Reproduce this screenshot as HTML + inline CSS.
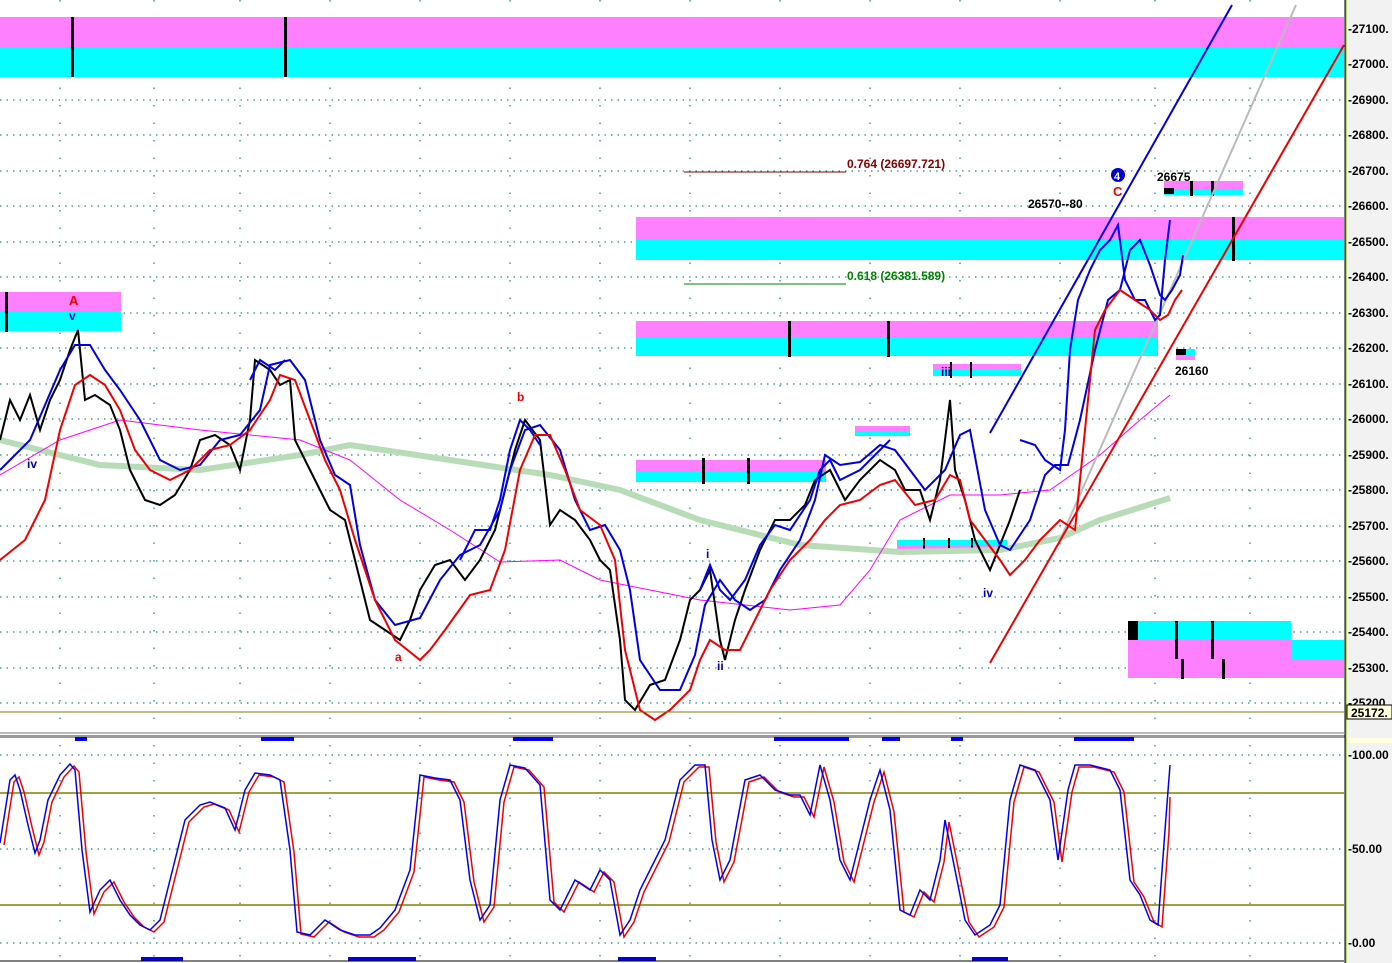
<!DOCTYPE html>
<html><head><meta charset="utf-8"><style>
html,body{margin:0;padding:0;background:#fff;}
svg{display:block;font-family:"Liberation Sans",sans-serif;}
</style></head><body>
<svg width="1392" height="963" viewBox="0 0 1392 963" xmlns="http://www.w3.org/2000/svg">
<rect width="1392" height="963" fill="#fff"/>
<g stroke="#2a8a8a" stroke-width="1.3" stroke-dasharray="1.5 5">
<line x1="0" y1="100" x2="1344" y2="100"/><line x1="0" y1="135" x2="1344" y2="135"/>
<line x1="0" y1="171" x2="1344" y2="171"/><line x1="0" y1="206" x2="1344" y2="206"/>
<line x1="0" y1="242" x2="1344" y2="242"/><line x1="0" y1="277" x2="1344" y2="277"/>
<line x1="0" y1="313" x2="1344" y2="313"/><line x1="0" y1="348" x2="1344" y2="348"/>
<line x1="0" y1="384" x2="1344" y2="384"/><line x1="0" y1="419" x2="1344" y2="419"/>
<line x1="0" y1="455" x2="1344" y2="455"/><line x1="0" y1="490" x2="1344" y2="490"/>
<line x1="0" y1="526" x2="1344" y2="526"/><line x1="0" y1="561" x2="1344" y2="561"/>
<line x1="0" y1="597" x2="1344" y2="597"/><line x1="0" y1="632" x2="1344" y2="632"/>
<line x1="0" y1="668" x2="1344" y2="668"/><line x1="0" y1="703" x2="1344" y2="703"/>
<line x1="0" y1="755" x2="1344" y2="755"/><line x1="0" y1="849" x2="1344" y2="849"/><line x1="0" y1="943" x2="1344" y2="943"/>
</g>
<g stroke="#2a8a8a" stroke-width="1.3" stroke-dasharray="1.5 16">
<line x1="60" y1="0" x2="60" y2="735"/><line x1="154" y1="0" x2="154" y2="735"/><line x1="240" y1="0" x2="240" y2="735"/>
<line x1="330" y1="0" x2="330" y2="735"/><line x1="420" y1="0" x2="420" y2="735"/><line x1="510" y1="0" x2="510" y2="735"/>
<line x1="600" y1="0" x2="600" y2="735"/><line x1="690" y1="0" x2="690" y2="735"/><line x1="780" y1="0" x2="780" y2="735"/>
<line x1="870" y1="0" x2="870" y2="735"/><line x1="960" y1="0" x2="960" y2="735"/><line x1="1060" y1="0" x2="1060" y2="735"/><line x1="1155" y1="0" x2="1155" y2="735"/><line x1="1250" y1="0" x2="1250" y2="735"/>
<line x1="60" y1="745" x2="60" y2="963"/><line x1="154" y1="745" x2="154" y2="963"/><line x1="240" y1="745" x2="240" y2="963"/>
<line x1="330" y1="745" x2="330" y2="963"/><line x1="420" y1="745" x2="420" y2="963"/><line x1="510" y1="745" x2="510" y2="963"/>
<line x1="600" y1="745" x2="600" y2="963"/><line x1="690" y1="745" x2="690" y2="963"/><line x1="780" y1="745" x2="780" y2="963"/>
<line x1="870" y1="745" x2="870" y2="963"/><line x1="960" y1="745" x2="960" y2="963"/><line x1="1060" y1="745" x2="1060" y2="963"/><line x1="1155" y1="745" x2="1155" y2="963"/><line x1="1250" y1="745" x2="1250" y2="963"/>
</g>
<rect x="0" y="17" width="1344" height="30" fill="#ff80ff"/><rect x="0" y="47" width="1344" height="30" fill="#00ffff"/>
<rect x="71" y="17" width="3" height="60" fill="#000"/><rect x="284" y="17" width="3" height="60" fill="#000"/>
<rect x="0" y="292" width="121" height="19" fill="#ff80ff"/><rect x="0" y="311" width="121" height="20" fill="#00ffff"/>
<rect x="5" y="292" width="3" height="40" fill="#000"/>
<rect x="636" y="217" width="708" height="22" fill="#ff80ff"/><rect x="636" y="239" width="708" height="21" fill="#00ffff"/>
<rect x="636" y="321" width="522" height="17" fill="#ff80ff"/><rect x="636" y="338" width="522" height="18" fill="#00ffff"/>
<rect x="788" y="321" width="3" height="36" fill="#000"/><rect x="887" y="321" width="3" height="36" fill="#000"/>
<rect x="636" y="460" width="190" height="11" fill="#ff80ff"/><rect x="636" y="471" width="190" height="11" fill="#00ffff"/>
<rect x="702" y="458" width="3" height="26" fill="#000"/><rect x="747" y="458" width="3" height="26" fill="#000"/>
<rect x="855" y="426" width="55" height="5" fill="#ff80ff"/><rect x="855" y="431" width="55" height="5" fill="#00ffff"/>
<rect x="933" y="364" width="88" height="6" fill="#ff80ff"/><rect x="933" y="370" width="88" height="6" fill="#00ffff"/>
<rect x="950" y="362" width="2" height="16" fill="#000"/><rect x="970" y="362" width="2" height="16" fill="#000"/>
<rect x="897" y="540" width="110" height="9" fill="#00ffff"/><rect x="897" y="545" width="110" height="5" fill="#ff80ff"/>
<rect x="923" y="538" width="2" height="14" fill="#000"/><rect x="948" y="538" width="2" height="14" fill="#000"/><rect x="971" y="538" width="2" height="14" fill="#000"/>
<rect x="1164" y="181" width="79" height="8" fill="#ff80ff"/><rect x="1164" y="189" width="79" height="6" fill="#00ffff"/>
<rect x="1164" y="188" width="10" height="6" fill="#000"/><rect x="1190" y="181" width="3" height="15" fill="#000"/><rect x="1211" y="181" width="3" height="15" fill="#000"/>
<rect x="1232" y="217" width="3" height="44" fill="#000"/>
<rect x="1176" y="349" width="19" height="6" fill="#00ffff"/><rect x="1176" y="355" width="19" height="5" fill="#ff80ff"/><rect x="1176" y="349" width="10" height="6" fill="#000"/>
<rect x="1128" y="621" width="163" height="19" fill="#00ffff"/><rect x="1128" y="640" width="163" height="19" fill="#ff80ff"/>
<rect x="1291" y="640" width="53" height="19" fill="#00ffff"/><rect x="1128" y="659" width="216" height="19" fill="#ff80ff"/>
<rect x="1128" y="621" width="10" height="19" fill="#000"/>
<rect x="1175" y="621" width="3" height="38" fill="#000"/><rect x="1211" y="621" width="3" height="38" fill="#000"/>
<rect x="1181" y="659" width="3" height="20" fill="#000"/><rect x="1222" y="659" width="3" height="20" fill="#000"/>
<line x1="684" y1="172" x2="846" y2="172" stroke="#800000" stroke-width="1"/>
<line x1="684" y1="284" x2="846" y2="284" stroke="#008000" stroke-width="1"/>
<text x="847" y="168" font-size="12" font-weight="bold" fill="#800000">0.764 (26697.721)</text>
<text x="847" y="280" font-size="12" font-weight="bold" fill="#008000">0.618 (26381.589)</text>
<polyline fill="none" stroke="#b8dcb8" stroke-width="6" points="0,440 100,465 200,470 300,455 350,445 450,460 550,475 620,490 700,520 800,545 900,552 1000,550 1060,538 1100,520 1170,498"/>
<polyline fill="none" stroke="#ff00ff" stroke-width="1" points="0,475 60,440 120,420 200,430 300,440 350,460 400,500 450,530 500,562 560,560 600,580 650,590 700,600 790,610 840,605 870,570 900,520 950,495 1000,495 1050,490 1100,455 1140,420 1170,395"/>
<line x1="990" y1="433" x2="1232" y2="5" stroke="#0000dd" stroke-width="2"/>
<line x1="1060" y1="540" x2="1296" y2="5" stroke="#bbbbbb" stroke-width="2"/>
<line x1="990" y1="663" x2="1344" y2="45" stroke="#ee0000" stroke-width="2"/>
<polyline fill="none" stroke="#000" stroke-width="2" points="0,440 10,400 20,420 30,395 40,430 50,400 60,380 70,350 78,330 85,400 95,395 110,405 120,430 130,470 145,500 160,505 175,495 190,470 200,440 215,435 230,445 240,470 250,420 255,360 270,370 280,385 290,380 295,440 310,470 330,510 345,520 355,560 370,620 385,630 400,640 410,620 420,590 435,565 450,560 465,580 480,560 495,530 505,490 515,450 525,420 540,440 550,525 560,510 575,520 590,540 600,560 610,570 620,640 625,700 635,710 650,685 665,680 680,640 690,600 700,590 710,570 720,640 725,660 735,620 745,590 760,550 775,520 790,520 805,505 815,480 830,470 845,500 860,480 880,460 895,470 905,490 920,490 930,520 940,480 950,400 955,470 965,500 975,540 990,570 1000,545 1010,520 1020,490"/>
<g fill="none" stroke="#0000ee" stroke-width="2">
<polyline points="250,380 260,360 275,370 285,360"/>
<polyline points="460,560 475,530 490,530 500,500 510,450 520,420 530,430 540,445"/>
<polyline points="700,590 710,565 720,590 730,600 745,580 760,545 775,525 790,530 810,500 820,470 830,460 840,480 860,470 880,450 890,440"/>
<polyline points="1020,440 1035,445 1045,460 1060,470 1065,430 1070,350 1078,300 1090,270 1100,250 1110,240 1118,225 1125,280 1135,300 1145,300 1155,320 1160,315 1165,260 1170,220"/>
</g>
<polyline fill="none" stroke="#0000dd" stroke-width="2" points="0,470 30,440 60,370 75,345 90,345 105,370 120,390 140,420 160,460 180,470 200,465 220,440 240,435 260,410 270,365 290,360 305,380 320,440 335,475 350,485 360,545 375,600 395,625 420,618 440,580 460,555 480,545 500,510 510,470 525,430 540,425 560,450 575,500 590,530 605,525 620,550 630,590 640,660 660,690 680,690 695,655 705,605 720,580 735,600 750,610 765,600 780,570 800,540 815,500 825,455 840,465 860,462 880,445 895,450 910,470 925,490 945,470 960,435 970,430 985,510 1000,545 1010,550 1030,520 1045,475 1055,465 1068,465 1080,420 1095,350 1108,300 1120,290 1130,250 1140,240 1150,265 1160,295 1165,300 1172,290 1180,275 1183,255"/>
<polyline fill="none" stroke="#ee0000" stroke-width="2" points="0,560 25,540 45,500 60,430 75,385 90,375 105,385 120,410 135,450 150,470 170,480 190,470 210,450 230,445 250,430 270,400 280,375 295,380 310,420 325,460 340,490 355,540 375,600 395,640 420,660 430,650 445,630 470,595 490,590 505,550 520,470 535,435 550,435 565,470 580,510 600,525 615,560 625,650 640,710 655,720 670,710 690,690 700,660 710,640 725,650 740,650 755,620 770,590 790,560 810,540 825,520 840,505 860,500 880,485 895,480 915,505 935,500 950,475 960,480 970,520 985,540 1000,560 1010,575 1025,560 1040,540 1060,520 1075,530 1085,430 1095,330 1105,310 1120,290 1135,300 1150,310 1160,320 1168,315 1175,300 1182,290"/>
<g font-weight="bold" font-size="13">
<text x="69" y="305" fill="#ee0000">A</text><text x="69" y="320" fill="#0000dd" font-size="12">v</text>
<text x="27" y="468" fill="#0000aa" font-size="12">iv</text>
<text x="517" y="401" fill="#ee0000" font-size="12">b</text>
<text x="395" y="661" fill="#ee0000" font-size="12">a</text>
<text x="706" y="558" fill="#0000dd" font-size="12">i</text>
<text x="717" y="670" fill="#0000aa" font-size="12">ii</text>
<text x="941" y="376" fill="#0000aa" font-size="12">iii</text>
<text x="983" y="597" fill="#0000aa" font-size="12">iv</text>
<text x="1113" y="196" fill="#ee0000">C</text>
<text x="1028" y="208" fill="#000" font-size="12">26570--80</text>
<text x="1157" y="181" fill="#000" font-size="12">26675</text>
<text x="1175" y="375" fill="#000" font-size="12">26160</text>
</g>
<circle cx="1118" cy="175" r="7" fill="#0000cc"/><text x="1114" y="180" font-size="11" font-weight="bold" fill="#fff">4</text>
<line x1="0" y1="712" x2="1344" y2="712" stroke="#808000" stroke-width="1"/>
<line x1="0" y1="733" x2="1344" y2="733" stroke="#bbb" stroke-width="2"/>
<rect x="0" y="735" width="1392" height="3" fill="#999"/>
<g fill="#0000ee">
<rect x="75" y="737" width="12" height="4"/><rect x="261" y="737" width="33" height="4"/><rect x="513" y="737" width="40" height="4"/><rect x="774" y="737" width="75" height="4"/><rect x="882" y="737" width="18" height="4"/><rect x="951" y="737" width="12" height="4"/><rect x="1074" y="737" width="60" height="4"/>
<rect x="141" y="957" width="42" height="4"/><rect x="348" y="957" width="68" height="4"/><rect x="618" y="957" width="38" height="4"/><rect x="972" y="957" width="36" height="4"/>
</g>
<line x1="0" y1="793" x2="1344" y2="793" stroke="#808000" stroke-width="1.5"/>
<line x1="0" y1="905" x2="1344" y2="905" stroke="#808000" stroke-width="1.5"/>
<line x1="0" y1="961" x2="1344" y2="961" stroke="#000" stroke-width="1"/>
<g fill="none" stroke-width="1.5">
<polyline stroke="#ee0000" transform="translate(4,2)" points="0,843 10,780 15,775 20,790 28,825 35,853 40,840 48,800 60,775 70,764 75,770 82,850 90,912 100,890 110,880 120,900 130,915 140,925 150,930 160,920 170,880 185,820 200,805 210,802 225,808 235,830 245,790 255,773 270,775 280,780 290,850 297,932 310,935 325,920 340,930 355,935 370,935 380,928 395,910 410,870 420,775 435,778 450,780 460,800 470,880 480,920 490,905 500,800 510,765 525,768 540,785 550,900 560,910 575,880 590,890 600,870 610,880 620,935 630,920 640,890 650,870 665,840 680,780 695,765 705,765 712,840 720,880 730,860 745,780 760,775 775,790 790,795 800,795 810,815 820,765 830,800 840,860 850,880 860,840 870,800 880,770 890,810 900,910 910,915 920,890 930,900 940,860 945,820 955,870 965,920 975,935 990,925 1000,905 1010,800 1020,765 1035,770 1050,800 1058,860 1068,790 1075,765 1090,765 1110,770 1120,790 1130,880 1140,895 1150,920 1158,925 1165,830 1166,795"/>
<polyline stroke="#0000ee" points="0,843 10,780 15,775 20,790 28,825 35,853 40,840 48,800 60,775 70,764 75,770 82,850 90,912 100,890 110,880 120,900 130,915 140,925 150,930 160,920 170,880 185,820 200,805 210,802 225,808 235,830 245,790 255,773 270,775 280,780 290,850 297,932 310,935 325,920 340,930 355,935 370,935 380,928 395,910 410,870 420,775 435,778 450,780 460,800 470,880 480,920 490,905 500,800 510,765 525,768 540,785 550,900 560,910 575,880 590,890 600,870 610,880 620,935 630,920 640,890 650,870 665,840 680,780 695,765 705,765 712,840 720,880 730,860 745,780 760,775 775,790 790,795 800,795 810,815 820,765 830,800 840,860 850,880 860,840 870,800 880,770 890,810 900,910 910,915 920,890 930,900 940,860 945,820 955,870 965,920 975,935 990,925 1000,905 1010,800 1020,765 1035,770 1050,800 1058,860 1068,790 1075,765 1090,765 1110,770 1120,790 1130,880 1140,895 1150,920 1158,925 1165,830 1170,765"/>
</g>
<rect x="1345" y="0" width="47" height="963" fill="#f2f2f2"/>
<line x1="1345" y1="0" x2="1345" y2="963" stroke="#000" stroke-width="1"/>
<line x1="1346" y1="0" x2="1346" y2="963" stroke="#80c000" stroke-width="1"/>
<g font-size="12" font-weight="bold" fill="#000">
<text x="1348" y="33">-27100.</text><text x="1348" y="68">-27000.</text><text x="1348" y="104">-26900.</text>
<text x="1348" y="139">-26800.</text><text x="1348" y="175">-26700.</text><text x="1348" y="210">-26600.</text>
<text x="1348" y="246">-26500.</text><text x="1348" y="281">-26400.</text><text x="1348" y="317">-26300.</text>
<text x="1348" y="352">-26200.</text><text x="1348" y="388">-26100.</text><text x="1348" y="423">-26000.</text>
<text x="1348" y="459">-25900.</text><text x="1348" y="494">-25800.</text><text x="1348" y="530">-25700.</text>
<text x="1348" y="565">-25600.</text><text x="1348" y="601">-25500.</text><text x="1348" y="636">-25400.</text>
<text x="1348" y="672">-25300.</text><text x="1348" y="707">-25200.</text>
<text x="1348" y="759">-100.00</text><text x="1348" y="853">-50.00</text><text x="1348" y="947">-0.00</text>
</g>
<rect x="1347" y="705" width="45" height="14" fill="#ffffe0" stroke="#000" stroke-width="1"/>
<text x="1351" y="717" font-size="12" font-weight="bold">25172.</text>
<rect x="1347" y="738" width="45" height="5" fill="#ffffe0"/>
</svg>
</body></html>
